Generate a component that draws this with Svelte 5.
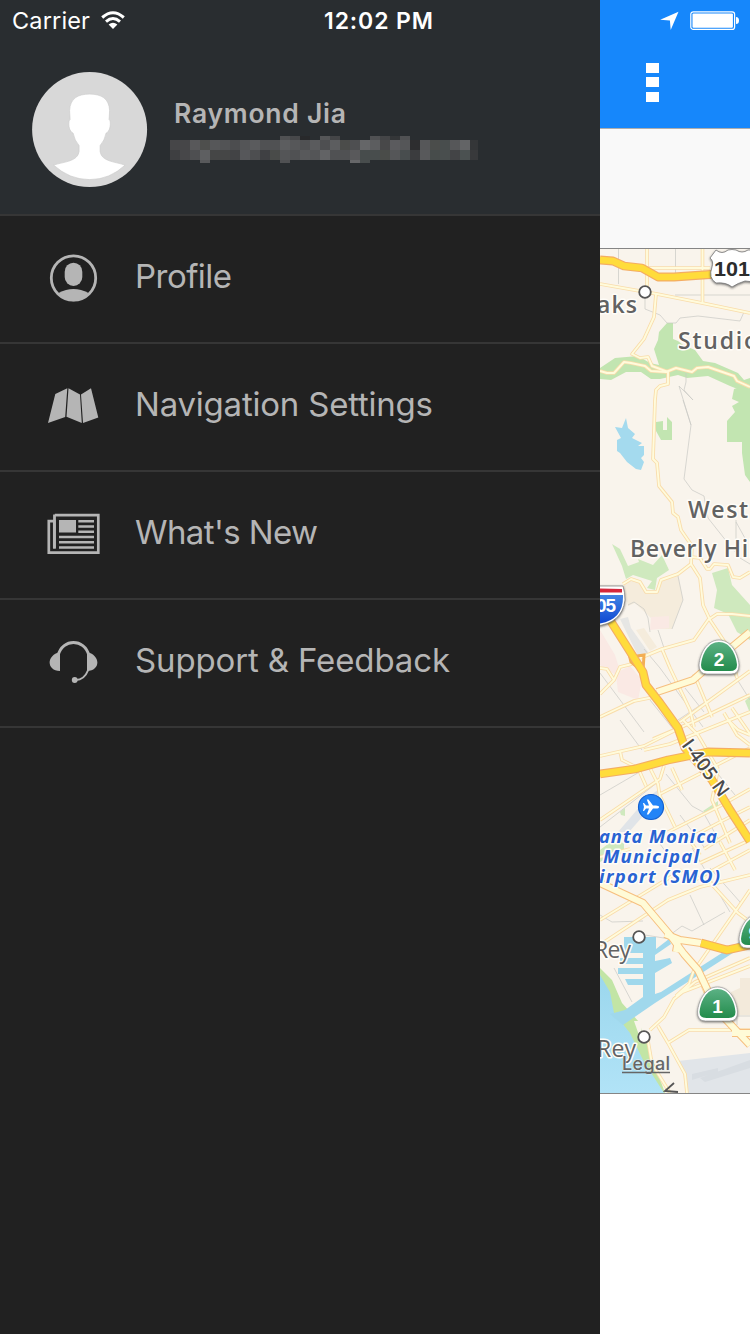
<script>
  const mosaic = [
    { y: 0, h: 4, cells: { 11: '#505153', 12: '#47484a', 13: '#28292b', 15: '#555658', 16: '#444547', 20: '#505153', 21: '#444547', 22: '#343638', 23: '#505153' } },
    { y: 4, h: 10, cells: ['#464648', '#464648', '#58585a', '#4e4f4d', '#565759', '#525355', '#4c4d4f', '#545557', '#5a5b5d', '#505153', '#505153', '#5c5d5f', '#565759', '#505153', '#5a5b5d', '#4e4f51', '#5c5d5f', '#4b4c4a', '#4e4f51', '#656668', '#5c5d5f', '#484849', '#5b5b5e', '#555658', '#2d2d2f', '#565759', '#4b4d4b', '#484d4d', '#565759', '#636466', '#343638'] },
    { y: 14, h: 10, cells: ['#3e3f41', '#474749', '#4e4f51', '#5e5f61', '#454646', '#454646', '#424345', '#56575a', '#4d4e50', '#3f4043', '#494b49', '#545557', '#505153', '#58595b', '#545557', '#626365', '#505153', '#505153', '#59595b', '#474c4c', '#484d4d', '#4a4c49', '#555658', '#484d4e', '#3b3c3e', '#58595b', '#474c4b', '#494e4e', '#434446', '#4b5151', '#38393b'] },
    { y: 24, h: 3, cells: { 3: '#58595b', 11: '#505153', 18: '#666769', 19: '#484d4d' } }
  ].flatMap((r) => Object.entries(r.cells).map(([c, fill]) => ({ x: c * 10, y: r.y, h: r.h, fill })));

  const tracks = [
    'M18.5 248V284', 'M75.500 248V280', 'M75 295H150', 'M45 292V309L60 315 67 323H76L80 318 98 316 140 321 144 312', 'M86 373V382L84 390 93 400 79 386 91 425', 'M83 400L91 425 84 479 92 490 104 496 108 518 127 542 140 558 150 564', 'M136 520V540M136 522L146 540',
    'M28 605L34 602 44 609 48 618 50 632M78 576L83 600 72 629M58 630L64 648M44 649L60 668 103 727M0 673L44 732M50 700L78 735M85 688L104 712M78 720L150 672M125 660L150 700', 'M0 795L60 760M0 827L58 782M20 720L42 750M66 774L92 806 103 812 120 842M105 758L135 795M50 830L68 855M92 848L130 912M140 720L150 732M80 815L104 847M110 868L140 902',
    'M0 915L12 922 43 921M70 935L82 926 92 931 125 912M90 895L104 925M106 878L118 890M14 968L32 1002M45 935L70 939M137 1025V1016H150'
  ];
  const minor = [
    'M47 248V290M47 268H110M102.500 248V303', 'M0 284L57 294 102 303 150 313', 'M56 294L54 317 44 339 32 354 40 358 48 357 52 366 68 372',
    'M0 371L7 373H14L24 362 31 363 45 366 51 371 66 372 76 368 92 372 97 368 108 367 134 376 137 381 150 387',
    'M68 372V384L60 386 56 390 55 400 53 459 57 463 59 486 72 502 73 513 78 517 81 530 92 546 91 564 100 578 103 605 110 620 130 650 137 678',
    'M23 584L31 579 40 582 46 592H57L61 580 78 574 91 564M91 557L100 558 107 569H110L114 564 128 565 133 577 140 578 150 572',
    'M150 616L132 614H117L108 620 94 640 62 649 40 658', 'M0 668L7 669 14 680 20 667 32 664M14 680L0 694M62 649L70 668 90 710 94 727', 'M0 717L34 701 54 697M94 674L112 717M80 722L150 671M53 739L93 722 150 695M124 713L137 735 150 745M132 708L150 734',
    'M0 756L44 746 84 726M20 751L22 760 36 767M44 750L70 744 150 712M50 768L58 784 60 798M38 768L46 786M64 766L60 779 0 820M60 794L150 748M72 768L82 790M60 796L75 827M83 720L98 735 118 769M128 720L138 730 150 735',
    'M68 832L120 806 150 789M86 840L120 822 150 807M118 770L112 800 130 843M104 849L150 820M100 863L150 840M95 880L150 850M90 841L100 855M120 842L135 870M0 857L30 849M0 920L82 870M0 945L68 900 100 887 150 875M106 878L138 913 150 922M150 890L135 912 98 965',
    'M50 1030L64 1017 74 999 95 982 150 958M76 996L89 984 94 970M48 1041L52 1064 70 1093M58 1026L68 1043 85 1074 87 1093M68 1043L89 1030 150 1030M80 993L150 966M115 1018L98 974'
  ];
  const trunk = ['M57 692L93 680 108 667 150 632', 'M0 883L43 903 70 935 84 954 98 970 117 1010 150 1045', 'M65 934L80 940 101 943', 'M78 940L76 952', 'M132 1033H150'];
  const highway = ['M0 260L13 261 24 266 42 268 58 277H74L110 274.500 150 274', 'M10 620L43 672 46 685 60 703 78 728 85 748 112 780 130 810 150 841', 'M0 774L35 769 68 760 93 755 108 752 150 753', 'M101 943L127 950 150 945'];

  const items = [
    { label: 'Profile', icon: 'profile', width: 97 },
    { label: 'Navigation Settings', icon: 'map', width: 298 },
    { label: "What's New", icon: 'news', width: 183 },
    { label: 'Support & Feedback', icon: 'headset', width: 315 }
  ];
</script>

<div class="screen">
  <aside>
    <header>
      <div class="status">
        <span class="carrier">Carrier</span>
        <svg class="wifi" width="26" height="20" viewBox="0 0 26 20">
          <g fill="none" stroke="#fff" stroke-width="3"><path d="M2.200 7.500Q13 -2 23.800 7.500" /><path d="M6 11.600Q13 5.500 20 11.600" /></g>
          <path d="M8.600 14.600Q13 11 17.400 14.600L13 19Z" fill="#fff" />
        </svg>
        <span class="time">12:02 PM</span>
      </div>
      <div class="account">
        <svg class="avatar" width="117" height="117" viewBox="-.6 -.6 117 117">
          <circle cx="58" cy="58" r="57.500" fill="#d8d8d8" />
          <path d="M58 22.500C70 22.500 77.500 27 78 39L77.500 48C79.500 49 78.800 57 77 59Q76.500 61 74.500 61.500Q73 69 68.500 74V80C70 90 83 90 93.500 93.500Q78 108 58 108T22 93.500C33 90 46 90 47.500 80V74Q43 69 41.500 61.500Q39.500 61 39 59C37 57 36.500 49 38.500 48L38 39C38.500 27 46 22.500 58 22.500Z" fill="#fff" stroke="#c9c9c9" stroke-width=".6" />
        </svg>
        <div class="identity">
          <span class="name">Raymond Jia</span>
          <svg class="email" width="308" height="27" shape-rendering="crispEdges">
            {#each mosaic as c}<rect x={c.x} y={c.y} width="10" height={c.h} fill={c.fill} />{/each}
          </svg>
        </div>
      </div>
    </header>
    <nav>
      {#each items as item}
        <div class="row">
          <svg class="icon" width="54" height="54" viewBox="0 0 54 54">
            {#if item.icon === 'profile'}
              <circle cx="27.500" cy="27" r="22.200" fill="none" stroke="#b5b5b5" stroke-width="2.800" />
              <rect x="18.700" y="11.700" width="17.600" height="23.300" rx="8.800" ry="9" />
              <path d="M12.500 42Q27.500 33.800 42.500 42Q36.500 50.200 27.500 50.200T12.500 42Z" />
            {:else if item.icon === 'map'}
              <path d="M9.300 14.900L21.300 9.300 19.200 38 2 44ZM22.500 9.300L34 15.500 35.800 44 20.500 37.700ZM35 15.500L45 9.300 52.300 38.500 37 44Z" />
            {:else if item.icon === 'news'}
              <path d="M8.800 8.200H52.300V45.700H2.800V14.200H8.300V41.500" fill="none" stroke="#b5b5b5" stroke-width="2.700" />
              <path d="M8.500 7.500V41.500" stroke="#b5b5b5" stroke-width="2.800" />
              <path d="M13 13H30V25.500H13ZM32.300 13H48V15.500H32.300ZM32.300 18.200H48V20.700H32.300ZM32.300 23.500H48V26H32.300ZM13 28.800H48V31.300H13ZM13 34H48V36.500H13ZM13 39.300H48V41.800H13Z" />
            {:else}
              <path d="M12.300 20C16.500 3.300 38.500 3.300 42.700 20" fill="none" stroke="#b5b5b5" stroke-width="2.900" />
              <path d="M11 17.900L14 17V36C1 36 .5 22 11 17.900ZM44 17.900L41 17V36C54 36 54.500 22 44 17.900Z" />
              <path d="M42.200 35Q38 45.500 29 45" fill="none" stroke="#b5b5b5" stroke-width="2" /><circle cx="28.700" cy="45" r="2.900" />
            {/if}
          </svg>
          <svg class="label" width="400" height="48"><text x="0" y="34" textLength={item.width}>{item.label}</text></svg>
        </div>
      {/each}
    </nav>
  </aside>

  <main>
    <div class="bar">
      <div class="indicators">
        <svg width="20" height="20" viewBox="0 0 20 20"><path d="M18.500 .8L10.700 19 9.900 9.600 .2 8.700Z" fill="#fff" /></svg>
        <svg width="50" height="20" viewBox="0 0 50 20"><rect x=".8" y=".8" width="43.800" height="17.600" rx="2.500" fill="none" stroke="#fff" stroke-width="1.200" /><rect x="2.500" y="2.500" width="40.400" height="14.200" rx="1" fill="#fff" /><path d="M46 6Q49 6 49 9.500T46 13Z" fill="#fff" /></svg>
      </div>
      <div class="dots"><i></i><i></i><i></i></div>
    </div>
    <div class="panel"></div>
    <svg class="map" width="150" height="846" viewBox="0 248 150 846">
      <defs>
        <linearGradient id="green" x2="0" y2="1"><stop stop-color="#5bb184" /><stop offset="1" stop-color="#238c4c" /></linearGradient>
        <linearGradient id="blue" x2="0" y2="1"><stop stop-color="#4284e4" /><stop offset="1" stop-color="#0d47d2" /></linearGradient>
        <linearGradient id="sea" x2="0" y2="1"><stop stop-color="#9bd7ed" /><stop offset="1" stop-color="#b1e3f7" /></linearGradient>
        <filter id="shadow" x="-20%" y="-20%" width="140%" height="150%"><feDropShadow dx="0" dy="1" stdDeviation="1" flood-color="#333" flood-opacity=".7" /></filter>
      </defs>
      <rect y="248" width="150" height="846" fill="#f9f4ec" />
      <path d="M23 584L31 579 40 582 46 592H57L61 580 78 574 83 600 72 629H51V618L35 603 28 606Z" fill="#f5ecdc" />
      <path d="M0 630L15 655 20 671 30 666 42 680 38 700 18 692 16 675 0 665ZM51 617L69 616V628L50 630Z" fill="#fae9e4" />
      <path d="M20 619L28 617 31 628 48 652 39 658Z" fill="#e6e6e4" /><path d="M36 630L44 628 57 647 50 651Z" fill="#f5ecdc" />
      <path d="M131 992L140 988V978H150V1015H131Z" fill="#f3eadb" />
      <path d="M78 1061L150 1053V1093H86L84 1073Z" fill="#e1e5e9" /><path d="M100 1078L150 1060V1068L105 1082M92 1074L118 1068V1072L92 1080" fill="#d8dde2" />
      <g fill="#c2e5b1">
        <path d="M67 323H73V339L78 341 83 345 95 350 103 361 115 363 138 373 144 380 150 378V394L130 386 108 376 87 378 78 375 60 379 51 379 41 372 26 372 11 380 0 379V368L15 358 38 356 50 363 59 365 54 349 58 340 59 332Z" />
        <path d="M150 384V482L145 475 142 453V442H127V421L135 412 132 406 139 402 132 399 134 389Z" />
        <path d="M56 422L63 421V430H67V417L72 422V440H61L56 431Z" />
      </g>
      <g fill="#cfe9be"><path d="M12 544L20 549 28 566 39 562 38 559 53 565 62 555 69 570 57 578 55 590 47 588 52 581 33 575 26 579 22 566Z" /><path d="M112 573L128 568 132 585 150 605V640L137 632 128 614 114 608 117 590Z" /><path d="M145 701L150 696V713ZM103 811L118 801V807L105 813M20 812L25 808V816L21 815M0 850L12 841 24 843V849L0 862Z" /></g>
      <path d="M15 427L22 428 26 418 28 428 35 434 32 438 42 443 38 446H44V455L41 458 44 462 41 470 36 469 27 462 20 453 17 451 17 440 21 438Z" fill="#a4daee" />
      <path d="M18 832L48 797 58 790 57 800 29 832Z" fill="#e0e4e8" />
      <path d="M0 968L12 980 22 1003 39 1022 65 1093H0Z" fill="#c2e5a5" />
      <path d="M0 975L10 992 14 1013 30 1033 43 1060 64 1093H0Z" fill="url(#sea)" />
      <path d="M24 937H56V949L69 939 71 944 55 955V961L70 958 72 963 55 973V994L61 992 150 935V942L55 1003 23 1025 10 1014 25 1010 43 997V985H28L25 979H43V974H18V968H43V964H20V958H43V953H24Z" fill="#a0d8ec" />
      <path d="M34 1021L42 1021 41 1041Z" fill="#f9f4ec" />
      {#each tracks as d}<path {d} class="track" />{/each}
      {#each minor as d}<path {d} class="minor-case" />{/each}
      {#each minor as d}<path {d} class="minor" />{/each}
      {#each trunk as d}<path {d} class="trunk-case" />{/each}
      {#each trunk as d}<path {d} class="trunk" />{/each}
      <path d="M28 650L31 662 44 673M43 671L44 655 37 656" fill="none" stroke="#f3ae54" stroke-width="3" />
      {#each highway as d}<path {d} class="highway-case" />{/each}
      {#each highway as d}<path {d} class="highway" />{/each}

      <g filter="url(#shadow)"><path d="M116 250Q122 255 128 250Q132 249 136 250Q142 254 148 250H154V282L145 281Q138 283 132 287Q126 282 116 283Q108 278 112 267Q114 261 110 258Z" fill="#fff" stroke="#777" stroke-width=".8" /></g>
      <text x="114" y="276" class="shield" fill="#2c2c2c" font-size="21" textLength="36" lengthAdjust="spacingAndGlyphs">101</text>
      <g filter="url(#shadow)"><path d="M-27 586H23Q25 592 25 600Q22 624 -5 626Q-25 617 -27 586Z" fill="#fff" stroke="#777" stroke-width=".7" /></g>
      <path d="M-25 588L22 589V592.500H-25Z" fill="#d5273c" /><path d="M-25 595H23Q24 619 0 623.500Q-22 616 -25 595Z" fill="url(#blue)" />
      <text x="-4" y="612" class="shield" fill="#fff" font-size="19" textLength="20">05</text>
      {#each [{ x: 119, y: 658, n: '2' }, { x: 159, y: 932, n: '90' }, { x: 117.500, y: 1005, n: '1' }] as s}
        <g transform="translate({s.x} {s.y})">
          <path filter="url(#shadow)" d="M0 -18C12 -18 19 -5 20 7Q20 16 12 16H-12Q-20 16 -20 7C-19 -5 -12 -18 0 -18Z" fill="#fff" stroke="#888" stroke-width=".6" />
          <path d="M0 -16C11 -16 17 -4 18 7Q18 13 11 13H-11Q-18 13 -18 7C-17 -4 -11 -16 0 -16Z" fill="url(#green)" />
          <text y="8" text-anchor="middle" class="shield" fill="#fff" font-size="19">{s.n}</text>
        </g>
      {/each}

      {#each [[45, 292], [39, 937], [44, 1037]] as [x, y]}<circle cx={x} cy={y} r="5.800" fill="#fff" stroke="#555" stroke-width="1.800" />{/each}
      <g class="place">
        <text x="-3" y="313" textLength="40">aks</text>
        <text x="78" y="349" textLength="80">Studio</text>
        <text x="88" y="518" textLength="60">West</text>
        <text x="30" y="557" textLength="144">Beverly Hills</text>
        <text x="-6" y="958" class="town" textLength="37">Rey</text>
        <text x="-3" y="1057" class="town" textLength="39">Rey</text>
      </g>
      <text transform="translate(81 745) rotate(54)" class="route" textLength="66">I-405 N</text>
      <g class="airport">
        <text x="-1" y="843" textLength="118">anta Monica</text>
        <text x="3" y="863" textLength="96">Municipal</text>
        <text x="-1" y="883" textLength="121">irport (SMO)</text>
      </g>
      <circle cx="51" cy="807" r="12.500" fill="#2384f7" stroke="#1460cf" stroke-width="1.200" />
      <path d="M59 807Q59 805.500 56 805.500H53L48.500 799.500H46.800L49 805.500H46L44 803H43L44 807 43 811H44L46 808.500H49L46.800 814.500H48.500L53 808.500H56Q59 808.500 59 807Z" fill="#fff" />
      <text x="22" y="1070" class="legal" textLength="48">Legal</text><path d="M22 1072.500H70" stroke="#666" stroke-width="1.500" />
      <path d="M74 1083L65 1091 78 1092" fill="none" stroke="#555" stroke-width="1.800" />
      <path d="M0 248.500H150M0 1093.500H150" stroke="#858585" />
    </svg>
    <div class="rest"></div>
  </main>
</div>

<style>
  :global(body) { background: #fff; }
  .screen { display: flex; width: 750px; height: 1334px; overflow: hidden; font-family: Inter, "Liberation Sans", sans-serif; }
  aside { width: 600px; height: 1334px; background: #212121; flex: none; }
  header { height: 216px; box-sizing: border-box; background: #292d30; border-bottom: 2px solid #363636; }
  .status { height: 40px; display: flex; align-items: center; padding-left: 12px; color: #fff; box-sizing: border-box; font-size: 23.500px; white-space: nowrap; }
  .carrier { width: 78px; letter-spacing: .15px; }
  .wifi { margin-left: 9.500px; margin-bottom: 1px; }
  .time { margin-left: 198.500px; margin-top: 1px; font-weight: 600; font-size: 23px; letter-spacing: .9px; }
  .account { display: flex; padding: 31px 0 0 31px; }
  .avatar, .email, .map { display: block; flex: none; }
  .identity { margin-left: 22px; padding-top: 25px; }
  .name { display: block; height: 40px; line-height: 34px; margin-left: 4px; font-weight: 600; font-size: 26.500px; letter-spacing: .75px; color: #b5b5b5; white-space: nowrap; }
  .row { height: 128px; box-sizing: border-box; border-bottom: 2px solid #363636; display: flex; padding: 35px 0 0 46px; }
  .icon { fill: #b5b5b5; flex: none; }
  .label { margin: 3px 0 0 35px; fill: #b5b5b5; font-size: 33px; overflow: visible; }
  main { width: 150px; flex: none; display: flex; flex-direction: column; }
  .bar { height: 128px; background: #1687fb; }
  .indicators { display: flex; gap: 10px; padding: 11px 0 0 60px; }
  .indicators svg { flex: none; display: block; }
  .dots { display: flex; flex-direction: column; gap: 4.300px; padding: 32px 0 0 45.500px; }
  .dots i { width: 13px; height: 10px; background: #fff; }
  .panel { height: 120px; background: #f9f9f9; border-top: 1px solid #adadad; box-sizing: border-box; }
  .rest { flex: 1; background: #fff; }
  .track { fill: none; stroke: #c9c8c4; stroke-width: .7; }
  .minor-case { fill: none; stroke: #f9dcaa; stroke-width: 3.600; stroke-linejoin: round; }
  .minor { fill: none; stroke: #fffbdc; stroke-width: 1.900; stroke-linejoin: round; }
  .trunk-case { fill: none; stroke: #f6bf7f; stroke-width: 8; stroke-linejoin: round; }
  .trunk { fill: none; stroke: #fffbd7; stroke-width: 6; stroke-linejoin: round; }
  .highway-case { fill: none; stroke: #f4ad63; stroke-width: 8.800; stroke-linejoin: round; }
  .highway { fill: none; stroke: #ffdc3b; stroke-width: 6.500; stroke-linejoin: round; }
  .shield { font-family: "Liberation Sans", Arial, sans-serif; font-weight: 700; }
  .place text, .airport text, .route, .legal { paint-order: stroke; stroke: #fffdf8; stroke-width: 3px; stroke-linejoin: round; }
  .place { font: 600 23px "Open Sans", sans-serif; fill: #626262; }
  .place .town { font-weight: 500; }
  .route { font: 600 19px "Open Sans", sans-serif; fill: #4b4b4b; }
  .airport { font: italic 700 18.500px "Open Sans", sans-serif; fill: #2963d3; }
  .legal { font: 500 18px Inter, sans-serif; fill: #666; stroke-width: 1px; stroke: #e6f0f2; }
</style>
